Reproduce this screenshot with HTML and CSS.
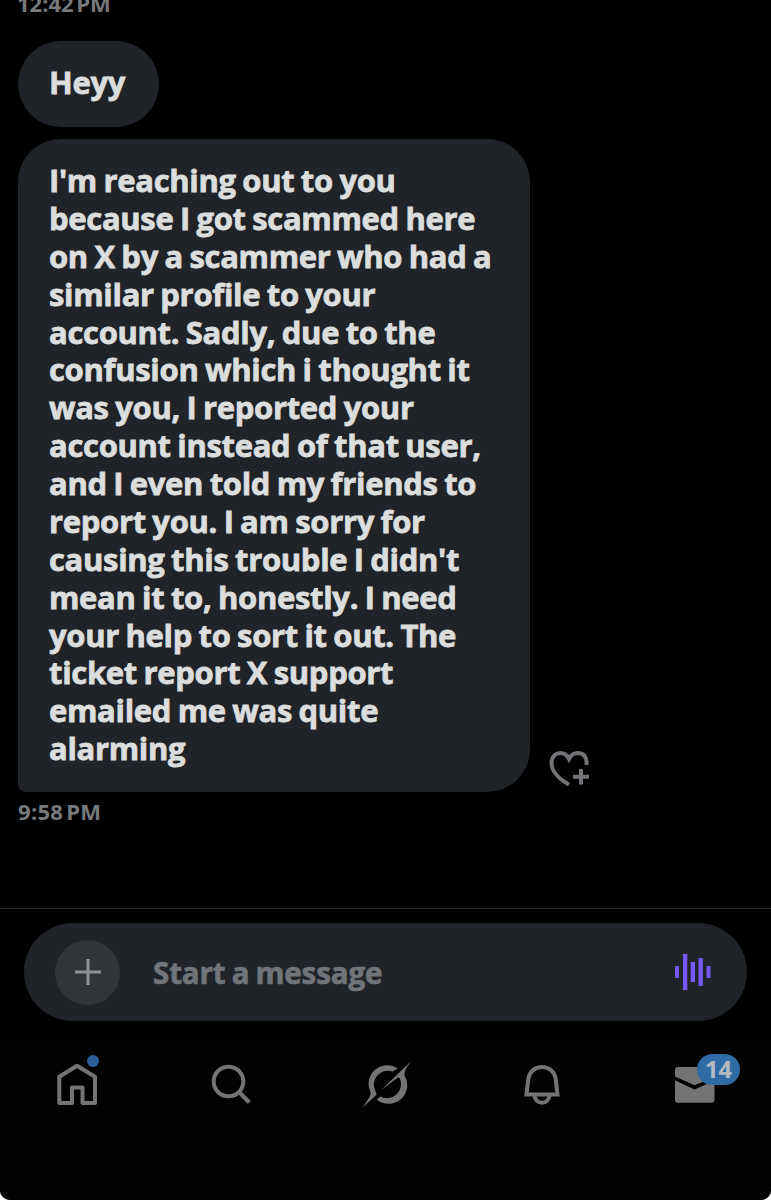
FILE: index.html
```html
<!DOCTYPE html>
<html lang="en">
<head>
    <meta charset="utf-8">
    <title>Messages</title>
    <meta name="viewport" content="width=device-width, initial-scale=1.0">
    <link rel="stylesheet" href="styles.css">
</head>
<body>
    <div class="app">
        <main class="chat">
            <div class="time time-first">12:42 PM</div>
            <div class="bubble bubble-short">Heyy</div>
            <div class="message-row">
                <div class="bubble bubble-long">
                    I'm reaching out to you<br>
                    because I got scammed here<br>
                    on X by a scammer who had a<br>
                    similar profile to your<br>
                    account. Sadly, due to the<br>
                    confusion which i thought it<br>
                    was you, I reported your<br>
                    account instead of that user,<br>
                    and I even told my friends to<br>
                    report you. I am sorry for<br>
                    causing this trouble I didn't<br>
                    mean it to, honestly. I need<br>
                    your help to sort it out. The<br>
                    ticket report X support<br>
                    emailed me was quite<br>
                    alarming
                </div>
                <svg class="react" viewBox="0 0 44 40" fill="none" stroke="#717376" stroke-width="4">
                    <path d="M21 36.500C11 31 3.500 23 3.500 15C3.500 9 7.500 5 12.500 5C16.500 5 19.300 7.500 21 11C22.700 7.500 25.500 5 30 5C35.500 5 39.300 9 38.500 17"/>
                    <path d="M33 21V36.500M25 28.700H41"/>
                </svg>
            </div>
            <div class="time">9:58 PM</div>
        </main>

        <div class="composer">
            <div class="input-bar">
                <div class="add">
                    <svg width="26" height="26" viewBox="0 0 26 26" stroke="#909294" stroke-width="3"><path d="M13 0V26M0 13H26"/></svg>
                </div>
                <span class="placeholder">Start a message</span>
                <svg class="voice" width="36" height="36" viewBox="0 0 36 36" fill="#7857f8">
                    <rect x="0" y="12" width="4" height="12"/>
                    <rect x="8" y="0" width="4.300" height="36"/>
                    <rect x="15.700" y="8" width="4.300" height="20"/>
                    <rect x="23.500" y="4" width="4.300" height="28"/>
                    <rect x="31.500" y="12" width="4" height="12"/>
                </svg>
            </div>
        </div>

        <nav class="tabs">
            <div class="tab">
                <svg viewBox="0 0 50 50" fill="none" stroke="#747474" stroke-width="4" stroke-linejoin="round">
                    <path d="M7.300 16.700L25 5.700L43 16.700V43H30.500V27.500H20V43H7.300Z"/>
                </svg>
                <span class="dot"></span>
            </div>
            <div class="tab">
                <svg viewBox="0 0 50 50" fill="none" stroke="#747474" stroke-width="4">
                    <circle cx="21.500" cy="21.500" r="14.800"/>
                    <path d="M32 32L42.300 42.500"/>
                </svg>
            </div>
            <div class="tab">
                <svg viewBox="0 0 50 50" fill="#747474">
                    <path d="M36.800 8.500A18.600 18.600 0 0 0 9.500 32C10 35.500 8.500 37.500 1.300 48L15.700 34.500C15.300 33.500 14.800 32.500 14.600 31.500A13.900 13.900 0 0 1 31.500 11.600Z"/>
                    <path d="M19.700 30.500L50 1.300C45.500 7.500 43.500 10.500 43.500 15.500A18.600 18.600 0 0 1 15.700 39.500L19.500 36.500A14 14 0 0 0 38.700 18.200L37.300 17.200Z"/>
                </svg>
            </div>
            <div class="tab">
                <svg viewBox="0 0 50 50" fill="none" stroke="#747474" stroke-width="4">
                    <path d="M10.500 34.500L12.300 19C13.300 11.500 19 7 26 7S38.700 11.500 39.700 19L41.500 34.500Z"/>
                    <path d="M18.200 35C19.200 40.500 22 42.700 26 42.700S32.800 40.500 33.800 35"/>
                </svg>
            </div>
            <div class="tab">
                <svg viewBox="0 0 50 50" fill="#747474">
                    <path d="M5 10Q5 7 8 7H41.500Q44.500 7 44.500 10V17.200L24.500 25.200L5 16.500Z"/>
                    <path d="M5 20.300L24.500 29.500L44.500 20.500V39.700Q44.500 42.700 41.500 42.700H8Q5 42.700 5 39.700Z"/>
                </svg>
                <span class="badge">14</span>
            </div>
        </nav>
    </div>
</body>
</html>
```

FILE: styles.css
```css
* {
    box-sizing: border-box;
}
body {
    margin: 0;
    background: #fff;
    font-family: "Open Sans", "Noto Sans", sans-serif;
    font-weight: 700;
}
.app {
    display: flex;
    flex-direction: column;
    height: 1200px;
    overflow: hidden;
    background: #000;
    border-radius: 0 0 10px 10px;
}
.chat {
    height: 908px;
    padding-left: 18px;
}
.time {
    height: 38px;
    line-height: 39px;
    font-size: 22px;
    letter-spacing: 0.3px;
    word-spacing: -3px;
    color: #77797c;
}
.time-first {
    margin-top: -16px;
    margin-bottom: 19px;
    margin-left: -1px;
    letter-spacing: 0;
}
.bubble {
    background: #202327;
    color: #dcdddd;
    font-size: 31px;
    line-height: 37.870px;
    letter-spacing: -0.320px;
    word-spacing: -1.2px;
    -webkit-text-stroke: 0.8px #dcdddd;
    white-space: nowrap;
}
.bubble-short {
    width: 141px;
    height: 86px;
    padding: 23px 31px;
    border-radius: 43px;
}
.message-row {
    display: flex;
    align-items: flex-end;
    gap: 18px;
    margin-top: 12px;
}
.bubble-long {
    width: 512px;
    height: 653px;
    padding: 23px 31px;
    border-radius: 43px 43px 43px 8px;
}
.react {
    width: 44px;
    height: 40px;
    margin-bottom: 4px;
}
.composer {
    height: 128px;
    padding: 14px 24px;
    border-top: 1px solid #292b2d;
}
.input-bar {
    display: flex;
    align-items: center;
    height: 98px;
    padding: 0 36px 0 31px;
    background: #202327;
    border-radius: 49px;
}
.add {
    display: flex;
    align-items: center;
    justify-content: center;
    width: 65px;
    height: 65px;
    border-radius: 50%;
    background: #323538;
}
.placeholder {
    margin-left: 33px;
    font-size: 29.5px;
    letter-spacing: -0.1px;
    word-spacing: -1.5px;
    -webkit-text-stroke: 0.7px #717478;
    color: #717478;
}
.voice {
    margin-left: auto;
}
.tabs {
    display: flex;
    justify-content: space-between;
    flex: 1;
    padding: 24px 51px 0 52px;
    background: #020202;
}
.tab {
    position: relative;
    width: 50px;
    height: 50px;
}
.tab svg {
    display: block;
    width: 50px;
    height: 50px;
}
.dot {
    position: absolute;
    top: -5px;
    left: 35px;
    width: 12px;
    height: 12px;
    border-radius: 50%;
    background: #2b5f96;
}
.badge {
    position: absolute;
    top: -6px;
    left: 27px;
    width: 43px;
    height: 31px;
    border-radius: 16px;
    background: #2f6ca5;
    color: #b5bcc3;
    font-size: 23.5px;
    line-height: 30px;
    text-align: center;
}
```
